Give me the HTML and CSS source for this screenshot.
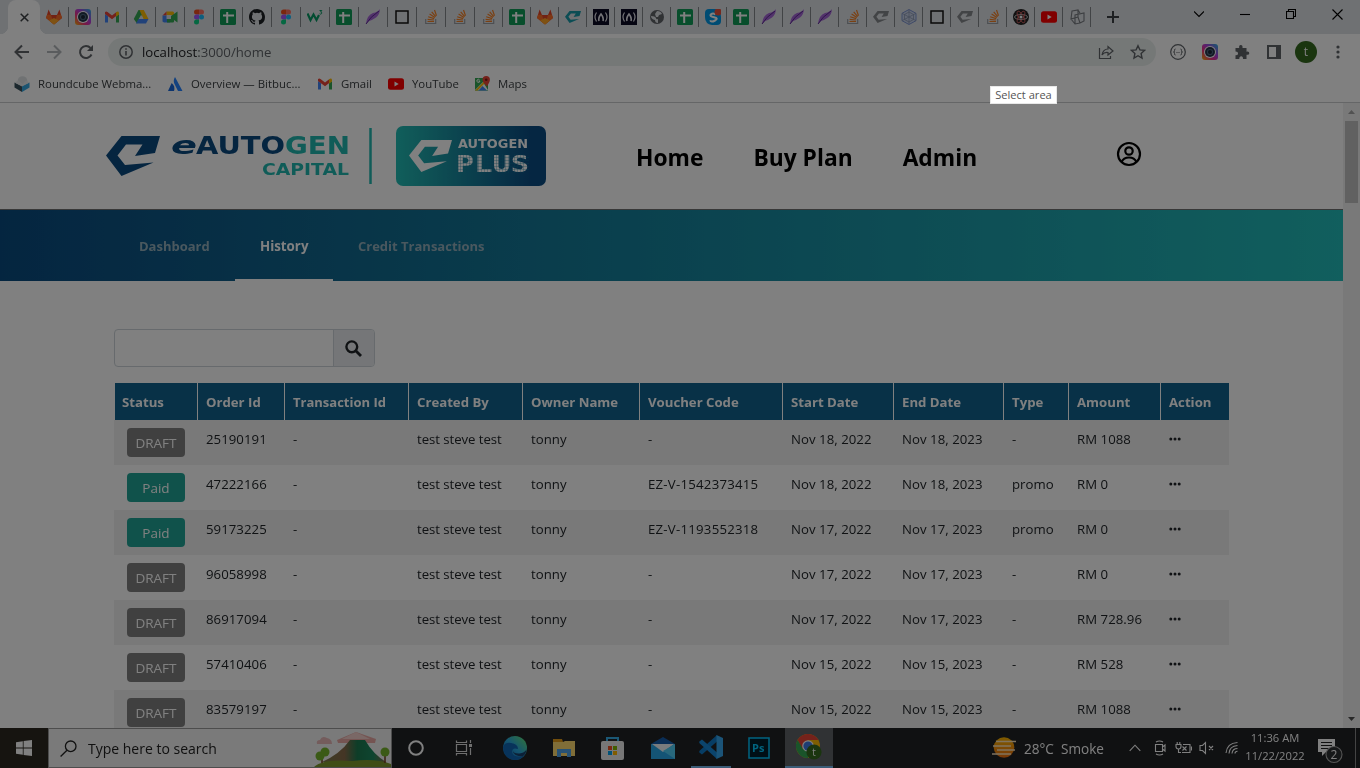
FILE: index.html
```html
<!DOCTYPE html>
<html lang="en">
<head>
<meta charset="utf-8">
<title>History</title>
<link rel="stylesheet" href="styles.css">
</head>
<body>
<svg class="defs" width="0" height="0" aria-hidden="true">
  <defs>
    <linearGradient id="plusbg"><stop offset="0" stop-color="#22bdb5"/><stop offset=".9" stop-color="#0a4c84"/></linearGradient>
    <linearGradient id="rainbow" x1="0" y1="1" x2="1" y2="0"><stop offset="0" stop-color="#f8b400"/><stop offset=".35" stop-color="#f0308a"/><stop offset=".6" stop-color="#b040e0"/><stop offset="1" stop-color="#22b8e0"/></linearGradient>
    <linearGradient id="edgeg" x1="0" y1="1" x2="1" y2="0"><stop offset="0" stop-color="#0c59a4"/><stop offset=".5" stop-color="#28a8e0"/><stop offset="1" stop-color="#66eb6e"/></linearGradient>
    <linearGradient id="sung" x1="0" y1="0" x2="0" y2="1"><stop offset="0" stop-color="#ffb900"/><stop offset="1" stop-color="#f07010"/></linearGradient>
    <linearGradient id="hill"><stop offset="0" stop-color="#7a7a4a"/><stop offset=".35" stop-color="#8a6a4a"/><stop offset=".55" stop-color="#1c7a50"/><stop offset=".8" stop-color="#1c8a60"/><stop offset="1" stop-color="#8a6a4a"/></linearGradient>
  </defs>
  <symbol id="gitlab" viewBox="0 0 16 16"><path fill="#e24329" d="M8 15.500 0 9 2.600.6 5 6h6L13.400.6 16 9z"/><path fill="#fc6d26" d="M0 9 1.200 5.500 5 6 8 15.500zM16 9l-1.200-3.500L11 6 8 15.500z"/><path fill="#fca326" d="m3 11.500 5-2.500 5 2.500-5 4z"/></symbol>
  <symbol id="cam" viewBox="0 0 16 16"><rect width="16" height="16" rx="3" fill="url(#rainbow)"/><circle cx="8" cy="8" r="6" fill="#fff"/><circle cx="8" cy="8" r="5" fill="#26364a"/><circle cx="8" cy="8" r="3.100" fill="#4c6680"/><circle cx="8" cy="8" r="2" fill="#1b2638"/></symbol>
  <symbol id="gmail" viewBox="0 0 16 16"><path fill="#4285f4" d="M1 3v10.500h3V7.300L1 5z"/><path fill="#34a853" d="M15 3v10.500h-3V7.300L15 5z"/><path fill="#ea4335" d="M1 3.200Q2 2 3.500 3L8 6.500 12.500 3v3.800L8 10.300 1 5z"/><path fill="#fbbc04" d="M12 3.300Q14.500 1.500 15 4v1.500l-3 2.200z"/></symbol>
  <symbol id="drive" viewBox="0 0 16 16"><path fill="#34a853" d="M5.500 1h3L10 4 4 14.500.8 10z"/><path fill="#fbbc04" d="M6.500 1h4.300l4.700 9h-5z"/><path fill="#4285f4" d="M5.500 10h10L13 14.500H3z"/><path fill="#dee1e6" d="m8 6 2.300 4H5.700z"/></symbol>
  <symbol id="meet" viewBox="0 0 16 16"><path fill="#fbbc04" d="M4.500 2.500H11l1 1V7l-3-1H4.500z"/><path fill="#ea4335" d="M.5 6.500 4.500 2.500v4z"/><path fill="#4285f4" d="M.5 6.500h4V10H9l-1 3.500H2L.5 12.500z"/><path fill="#34a853" d="M5 10h4V7l6.500-4.500v11L12 11v1.500q0 1-1 1H5z"/></symbol>
  <symbol id="figma" viewBox="0 0 16 16"><path fill="#f24e1e" d="M8 .5H5.500a2.500 2.500 0 0 0 0 5H8z"/><path fill="#ff7262" d="M8 .5h2.500a2.500 2.500 0 0 1 0 5H8z"/><path fill="#a259ff" d="M8 5.500H5.500a2.500 2.500 0 0 0 0 5H8z"/><circle cx="10.500" cy="8" r="2.500" fill="#1abcfe"/><path fill="#0acf83" d="M8 10.500H5.500A2.500 2.500 0 1 0 8 13z"/></symbol>
  <symbol id="sheet" viewBox="0 0 16 16"><rect width="16" height="16" rx="1.500" fill="#0f9d58"/><path stroke="#fff" stroke-width="2" d="M7.200 3v11M3 6.500h11"/></symbol>
  <symbol id="github" viewBox="0 0 16 16"><path fill="#1b1f23" d="M8 0C3.580 0 0 3.580 0 8c0 3.540 2.290 6.530 5.470 7.590.4.070.55-.17.55-.38 0-.19-.01-.82-.01-1.490-2.010.37-2.530-.49-2.690-.94-.09-.23-.48-.94-.82-1.130-.28-.15-.68-.52-.01-.53.63-.01 1.080.58 1.230.82.72 1.210 1.870.87 2.330.66.07-.52.28-.87.51-1.070-1.780-.2-3.640-.89-3.640-3.950 0-.87.31-1.590.82-2.150-.08-.2-.36-1.020.08-2.120 0 0 .67-.21 2.200.82a7.600 7.600 0 0 1 4 0c1.530-1.040 2.200-.82 2.200-.82.44 1.100.16 1.920.08 2.120.51.56.82 1.270.82 2.150 0 3.070-1.870 3.750-3.650 3.950.29.25.54.73.54 1.480 0 1.070-.01 1.930-.01 2.200 0 .21.15.46.55.38A8.010 8.010 0 0 0 16 8c0-4.420-3.580-8-8-8z"/></symbol>
  <symbol id="w3" viewBox="0 0 16 16"><path fill="none" stroke="#059862" stroke-width="2.200" d="m.5 4.500 3 6.500L6.500 5.500l3 5.500 2.500-5"/><path fill="none" stroke="#059862" stroke-width="1" d="M12.500 1.500h2.300L13.600 3q1.700.2 1 1.600-.7 1-2 .2"/></symbol>
  <symbol id="feather" viewBox="0 0 16 16"><path fill="#a565d6" d="M1 15Q2 6 8 4q5-1 7-4-.5 6-4 8.500T4 12z"/><path stroke="#5c2a94" fill="none" d="M1 15Q5 8 14 2"/></symbol>
  <symbol id="square" viewBox="0 0 16 16"><path fill="none" stroke="#111" stroke-width="1.500" d="M2 2h12v12H2z"/></symbol>
  <symbol id="so" viewBox="0 0 16 16"><path fill="none" stroke="#9a9ea4" stroke-width="1.200" d="M2.700 10v4.500h10V10"/><path fill="none" stroke="#f48024" stroke-width="1.200" d="M4.500 12.500h6.500M4.600 10.300l6.300.7M5.200 7.700l6 1.900M6.600 5.100l5.300 3.300M8.700 2.800l4 4.800M11.500 1l2 5.700"/></symbol>
  <symbol id="mark" viewBox="0 0 54 40"><path fill="currentColor" d="M15.500 0H54l-5 17-20 3 7.500-11.500H20l-8.500 11L19 29l28.500-2.500L15.500 40 0 19.500z"/></symbol>
  <symbol id="fcc" viewBox="0 0 16 16"><path fill="#0a0a23" d="M0 0h16v16H0z"/><path fill="none" stroke="#e8e8f0" stroke-width="1.200" d="M3.500 3.500q-3 4.500 0 9M12.500 3.500q3 4.500 0 9"/><path fill="none" stroke="#e8e8f0" stroke-width="1.600" d="M6 12q-1-3 2-7 3 4 2 7"/></symbol>
  <symbol id="globe" viewBox="0 0 16 16"><circle cx="8" cy="8" r="7" fill="#5f6368"/><path fill="#dee1e6" d="M2 7q4 0 5 2 0 2 2 1v4q-3 0-3-3Q2 10 2 7zM8 2q4 0 5 3l-3 1-1 2H7L6 5z"/></symbol>
  <symbol id="skype" viewBox="0 0 16 16"><path fill="#0097e6" d="M0 4q0-4 4-4h7q5 2 5 8v4q0 4-4 4H7Q0 15 0 8z"/><path fill="none" stroke="#fff" stroke-width="2" d="M10.500 5.500Q8 3.500 6 5.300T9 8.200t1 3.300-4.800-.2"/><circle cx="13" cy="3" r="3.500" fill="#e8503c"/></symbol>
  <symbol id="hex" viewBox="0 0 16 16"><path fill="#c8d2e8" stroke="#7d94cf" d="m8 .5 7 3.800v7.400l-7 3.800-7-3.800V4.300z"/><path fill="none" stroke="#8a98b4" stroke-width=".8" d="m8 3 4.500 2.500v5L8 13l-4.500-2.500v-5zM8 .5V15M1 4.300l14 7.400M15 4.300 1 11.700"/></symbol>
  <symbol id="atom" viewBox="0 0 16 16"><circle cx="8" cy="8" r="8" fill="#222"/><g fill="none" stroke="#ddd" stroke-width=".8"><ellipse cx="8" cy="8" rx="6.500" ry="2.500"/><ellipse cx="8" cy="8" rx="6.500" ry="2.500" stroke="#d66" transform="rotate(60 8 8)"/><ellipse cx="8" cy="8" rx="6.500" ry="2.500" stroke="#d66" transform="rotate(120 8 8)"/></g><circle cx="8" cy="8" r="1.600" fill="#fff"/></symbol>
  <symbol id="yt" viewBox="0 0 16 16"><rect y="2.200" width="16" height="11.600" rx="2.500" fill="#f00"/><path fill="#fff" d="m6.500 5.500 4.200 2.500-4.200 2.500z"/></symbol>
  <symbol id="cube" viewBox="0 0 16 16"><path fill="none" stroke="#777b80" stroke-width="1.100" d="m3 2 6-1v7l-7 2zM9 1l2 3M9 8l2 6M2 10l4 5 5-1M6 15V6l9-2v8l-4 2"/></symbol>
  <symbol id="cubebm" viewBox="0 0 16 16"><circle cx="8.500" cy="5" r="4.800" fill="#dfe3e6"/><path fill="#37505c" d="M.5 6.500 8 10v6L.5 11.500z"/><path fill="#36a9e1" d="M15.500 6.500 8 10v6l7.500-4.500z"/><path fill="#e9eced" d="m.5 6.500 4-2 4 3.500 3.500-3.500 3.500 2L8 10.500z"/></symbol>
  <symbol id="atl" viewBox="0 0 16 16"><path fill="#2684ff" d="M8 1q-2.500 4 0 8l3 6h4.500z"/><path fill="#1868db" d="M4.700 7Q8.500 10 7 15H1z"/></symbol>
  <symbol id="maps" viewBox="0 0 16 16"><path fill="#34a853" d="M1 2h13v12.500H1z"/><path fill="#fff" d="m1 14 8-8 5 8z"/><path fill="#fbbc04" d="m1 14.500 10-10 1 1.500-8.500 8.500z"/><path fill="#4285f4" d="m4.500 14.500 4-4.500 4.500 4.500z"/><path fill="#ea4335" d="M8.500 3.800a3.700 3.700 0 0 1 7.400 0q0 2.200-3 6.700Q8.500 6 8.500 3.800z"/><circle cx="12.200" cy="3.800" r="1.300" fill="#7b1c14"/><path fill="none" stroke="#fff" d="M5.500 3.800a1.500 1.500 0 1 0 .4 1.200H4.500"/></symbol>
  <symbol id="dots" viewBox="0 0 12 4"><circle cx="1.800" cy="2" r="1.500"/><circle cx="6" cy="2" r="1.500"/><circle cx="10.200" cy="2" r="1.500"/></symbol>
</svg>

<div class="screen">
  <div class="tabstrip">
    <div class="tab-active"><svg width="9" height="9" viewBox="0 0 9 9"><path d="m.7.700 7.600 7.600M8.300.7.700 8.300" stroke="#3c4043" stroke-width="1.500"/></svg></div>
    <div class="tabs wide">
      <span class="tab"><svg><use href="#gitlab"/></svg></span><span class="tab"><svg><use href="#cam"/></svg></span><span class="tab"><svg><use href="#gmail"/></svg></span><span class="tab"><svg><use href="#drive"/></svg></span><span class="tab"><svg><use href="#meet"/></svg></span><span class="tab"><svg><use href="#figma"/></svg></span><span class="tab"><svg><use href="#sheet"/></svg></span><span class="tab"><svg><use href="#github"/></svg></span><span class="tab"><svg><use href="#figma"/></svg></span><span class="tab"><svg><use href="#w3"/></svg></span><span class="tab"><svg><use href="#sheet"/></svg></span><span class="tab"><svg><use href="#feather"/></svg></span><span class="tab"><svg><use href="#square"/></svg></span><span class="tab"><svg><use href="#so"/></svg></span><span class="tab"><svg><use href="#so"/></svg></span>
    </div>
    <div class="tabs">
      <span class="tab"><svg><use href="#so"/></svg></span><span class="tab"><svg><use href="#sheet"/></svg></span><span class="tab"><svg><use href="#gitlab"/></svg></span><span class="tab teal"><svg><use href="#mark"/></svg></span><span class="tab"><svg><use href="#fcc"/></svg></span><span class="tab"><svg><use href="#fcc"/></svg></span><span class="tab"><svg><use href="#globe"/></svg></span><span class="tab"><svg><use href="#sheet"/></svg></span><span class="tab"><svg><use href="#skype"/></svg></span><span class="tab"><svg><use href="#sheet"/></svg></span><span class="tab"><svg><use href="#feather"/></svg></span><span class="tab"><svg><use href="#feather"/></svg></span><span class="tab"><svg><use href="#feather"/></svg></span><span class="tab"><svg><use href="#so"/></svg></span><span class="tab gray"><svg><use href="#mark"/></svg></span><span class="tab"><svg><use href="#hex"/></svg></span><span class="tab"><svg><use href="#square"/></svg></span><span class="tab gray"><svg><use href="#mark"/></svg></span><span class="tab"><svg><use href="#so"/></svg></span><span class="tab"><svg><use href="#atom"/></svg></span><span class="tab"><svg><use href="#yt"/></svg></span><span class="tab"><svg><use href="#cube"/></svg></span>
    </div>
    <svg class="newtab" width="12" height="12" viewBox="0 0 12 12"><path d="M6 0v12M0 6h12" stroke="#3c4043" stroke-width="2"/></svg>
    <div class="winctl">
      <svg width="10" height="10" viewBox="0 0 10 10"><path d="m0 2.500 5 5 5-5"/></svg>
      <svg width="10" height="10" viewBox="0 0 10 10"><path d="M0 5.500h10"/></svg>
      <svg width="10" height="10" viewBox="0 0 10 10"><path d="M.5 2.500h7v7h-7zM2.500 2.500v-2h7v7h-2"/></svg>
      <svg width="11" height="11" viewBox="0 0 11 11"><path d="m.5.500 10 10m0-10-10 10"/></svg>
    </div>
  </div>

  <div class="toolbar">
    <div class="navbtns">
      <svg width="16" height="16" viewBox="0 0 16 16"><path d="M15 8H2M8 1.500 1.500 8 8 14.500" fill="none" stroke="#5f6368" stroke-width="2"/></svg>
      <svg width="16" height="16" viewBox="0 0 16 16"><path d="M1 8h13M8 1.500 14.500 8 8 14.500" fill="none" stroke="#b4b7bb" stroke-width="2"/></svg>
      <svg width="16" height="16" viewBox="0 0 16 16"><path d="M13.500 10.500A6 6 0 1 1 12.500 4" fill="none" stroke="#5f6368" stroke-width="2"/><path d="M15 1v6H9z" fill="#5f6368"/></svg>
    </div>
    <div class="omnibox">
      <svg width="14" height="14" viewBox="0 0 14 14"><circle cx="7" cy="7" r="6.200" fill="none" stroke="#5f6368" stroke-width="1.500"/><path d="M7 6v4.500M7 3.300v1.500" stroke="#5f6368" stroke-width="1.600"/></svg>
      <div class="url"><b>localhost</b>:3000/home</div>
      <svg width="16" height="16" viewBox="0 0 16 16"><path d="M1.500 4v10.500h11V12M4 11q1-6 6-6V2.500L15 7l-5 4V8.500q-4-.5-6 2.500z" fill="none" stroke="#5f6368" stroke-width="1.200"/></svg>
      <svg class="star" width="16" height="16" viewBox="0 0 16 16"><path d="m8 1.700 1.900 4.200 4.600.5-3.400 3.100.9 4.500-4-2.300L4 14l.9-4.500-3.400-3.100 4.600-.5z" fill="none" stroke="#5f6368" stroke-width="1.400"/></svg>
    </div>
    <div class="exts">
      <svg width="16" height="16" viewBox="0 0 16 16"><circle cx="8" cy="8" r="7.300" fill="none" stroke="#5f6368" stroke-width="1.200"/><path d="M5.500 5q-1.200 0-1 1.500T3.500 8q1.200 0 1 1.500t1 1.500M10.500 5q1.200 0 1 1.500t1 1.500q-1.200 0-1 1.500t-1 1.500M6.500 8.500h1m1 0h1" fill="none" stroke="#5f6368"/></svg>
      <svg width="16" height="16"><use href="#cam"/></svg>
      <svg width="16" height="16" viewBox="0 0 16 16"><path d="M1.500 4h3.700Q4.700 1 6.800 1t1.700 3H12.500v3.700q2.800-.5 2.800 1.500t-2.800 1.600V15H9q.1-2.800-1.800-2.800T5.300 15H1.500v-3.700q2.600 0 2.600-1.900T1.500 7.600z" fill="#5f6368"/></svg>
      <svg width="14" height="14" viewBox="0 0 14 14"><path d="M1 1h12v12H1z" fill="none" stroke="#5f6368" stroke-width="2"/><path d="M9 1h4v12H9z" fill="#5f6368"/></svg>
      <span class="avatar">t</span>
      <svg class="kebab" width="4" height="14" viewBox="0 0 4 14" fill="#5f6368"><circle cx="2" cy="2" r="1.600"/><circle cx="2" cy="7" r="1.600"/><circle cx="2" cy="12" r="1.600"/></svg>
    </div>
  </div>

  <div class="bookmarks">
    <span class="bm b1"><svg><use href="#cubebm"/></svg><em>Roundcube Webma...</em></span>
    <span class="bm b2"><svg><use href="#atl"/></svg><em>Overview — Bitbuc...</em></span>
    <span class="bm b3"><svg><use href="#gmail"/></svg><em>Gmail</em></span>
    <span class="bm b4"><svg><use href="#yt"/></svg><em>YouTube</em></span>
    <span class="bm b5"><svg><use href="#maps"/></svg><em>Maps</em></span>
  </div>

  <div class="viewport">
    <div class="page">
      <header class="top">
        <svg class="logo" width="442" height="60" viewBox="0 0 442 60">
          <g color="#0a4a80"><use href="#mark" x="0" y="10" width="54" height="40"/></g>
          <g class="brand">
            <text x="65" y="28" font-size="24" font-style="italic" textLength="26" lengthAdjust="spacingAndGlyphs" fill="#0a4a80">e</text>
            <text x="90" y="28" font-size="24" textLength="89" lengthAdjust="spacingAndGlyphs" fill="#0a4a80">AUTO</text>
            <text x="179" y="28" font-size="24" textLength="65" lengthAdjust="spacingAndGlyphs" fill="#20b9b0">GEN</text>
            <text x="156" y="49" font-size="15.500" textLength="87" lengthAdjust="spacingAndGlyphs" fill="#20b9b0">CAPITAL</text>
          </g>
          <path d="M264.500 2v56" stroke="#20b9b0" stroke-width="2.500"/>
          <rect x="290" y="0" width="150" height="60" rx="7" fill="url(#plusbg)"/>
          <g color="#fff"><use href="#mark" x="303" y="14" width="43" height="32"/></g>
          <g class="brand" fill="#fff">
            <text x="352" y="22" font-size="12" textLength="70" lengthAdjust="spacingAndGlyphs">AUTOGEN</text>
          </g>
          <text class="plus" x="350" y="46" font-size="23" textLength="73" lengthAdjust="spacingAndGlyphs" fill="#fff">PLUS</text>
          <path class="dotgrid" d="M351 31.500h72M351 34.500h72M351 37.500h72M351 40.500h72M351 43.500h72M354.500 28v19M357.500 28v19M360.500 28v19M363.500 28v19M366.500 28v19M372.500 28v19M375.500 28v19M378.500 28v19M381.500 28v19M384.500 28v19M390.500 28v19M393.500 28v19M396.500 28v19M399.500 28v19M402.500 28v19M408.500 28v19M411.500 28v19M414.500 28v19M417.500 28v19"/>
        </svg>
        <nav class="mainnav"><a>Home</a><a>Buy Plan</a><a>Admin</a></nav>
        <svg class="user" width="26" height="26" viewBox="0 0 26 26" fill="none" stroke="#000" stroke-width="2.200"><circle cx="13" cy="13" r="11"/><circle cx="13" cy="10" r="3.700"/><path d="M5.500 21q2-4.500 7.500-4.500t7.500 4.500"/></svg>
      </header>
      <nav class="subnav"><a class="s1">Dashboard</a><a class="s2 on">History</a><a class="s3">Credit Transactions</a></nav>
      <main class="content">
        <div class="search"><div class="field"></div><div class="go"><svg width="17" height="17" viewBox="0 0 17 17"><circle cx="6.800" cy="6.800" r="5.400" fill="none" stroke="#212529" stroke-width="2.400"/><path d="m11 11 5 5" stroke="#212529" stroke-width="2.800"/></svg></div></div>
        <table class="orders">
          <colgroup><col class="c1"><col class="c2"><col class="c3"><col class="c4"><col class="c5"><col class="c6"><col class="c7"><col class="c8"><col class="c9"><col class="c10"><col class="c11"></colgroup>
          <thead><tr><th>Status</th><th>Order Id</th><th>Transaction Id</th><th>Created By</th><th>Owner Name</th><th>Voucher Code</th><th>Start Date</th><th>End Date</th><th>Type</th><th>Amount</th><th>Action</th></tr></thead>
          <tbody>
            <tr><td><span class="badge">DRAFT</span></td><td>25190191</td><td>-</td><td>test steve test</td><td>tonny</td><td>-</td><td>Nov 18, 2022</td><td>Nov 18, 2023</td><td>-</td><td>RM 1088</td><td><svg class="more"><use href="#dots"/></svg></td></tr>
            <tr><td><span class="badge paid">Paid</span></td><td>47222166</td><td>-</td><td>test steve test</td><td>tonny</td><td class="code-cell">EZ-V-1542373415</td><td>Nov 18, 2022</td><td>Nov 18, 2023</td><td>promo</td><td>RM 0</td><td><svg class="more"><use href="#dots"/></svg></td></tr>
            <tr><td><span class="badge paid">Paid</span></td><td>59173225</td><td>-</td><td>test steve test</td><td>tonny</td><td class="code-cell">EZ-V-1193552318</td><td>Nov 17, 2022</td><td>Nov 17, 2023</td><td>promo</td><td>RM 0</td><td><svg class="more"><use href="#dots"/></svg></td></tr>
            <tr><td><span class="badge">DRAFT</span></td><td>96058998</td><td>-</td><td>test steve test</td><td>tonny</td><td>-</td><td>Nov 17, 2022</td><td>Nov 17, 2023</td><td>-</td><td>RM 0</td><td><svg class="more"><use href="#dots"/></svg></td></tr>
            <tr><td><span class="badge">DRAFT</span></td><td>86917094</td><td>-</td><td>test steve test</td><td>tonny</td><td>-</td><td>Nov 17, 2022</td><td>Nov 17, 2023</td><td>-</td><td>RM 728.96</td><td><svg class="more"><use href="#dots"/></svg></td></tr>
            <tr><td><span class="badge">DRAFT</span></td><td>57410406</td><td>-</td><td>test steve test</td><td>tonny</td><td>-</td><td>Nov 15, 2022</td><td>Nov 15, 2023</td><td>-</td><td>RM 528</td><td><svg class="more"><use href="#dots"/></svg></td></tr>
            <tr><td><span class="badge">DRAFT</span></td><td>83579197</td><td>-</td><td>test steve test</td><td>tonny</td><td>-</td><td>Nov 15, 2022</td><td>Nov 15, 2023</td><td>-</td><td>RM 1088</td><td><svg class="more"><use href="#dots"/></svg></td></tr>
          </tbody>
        </table>
      </main>
    </div>
    <div class="scrollbar">
      <svg width="7" height="4" viewBox="0 0 7 4"><path d="M0 4 3.500 0 7 4z" fill="#a3a3a3"/></svg>
      <div class="thumb"></div>
      <svg class="down" width="7" height="4" viewBox="0 0 7 4"><path d="m0 0 3.500 4L7 0z" fill="#505050"/></svg>
    </div>
  </div>

  <footer class="taskbar">
    <div class="start"><svg width="16" height="16" viewBox="0 0 16 16" fill="#fff"><path d="M0 2.200 6.800 1.200V7.600H0zM7.600 1.100 16 0v7.600H7.600zM0 8.400h6.800v6.400L0 13.800zM7.600 8.400H16V16l-8.400-1.100z"/></svg></div>
    <div class="find">
      <svg width="17" height="17" viewBox="0 0 17 17"><circle cx="10.700" cy="6.300" r="5.300" fill="none" stroke="#222" stroke-width="1.300"/><path d="M7 10.200.6 16.500" stroke="#222" stroke-width="1.300"/></svg>
      <span>Type here to search</span>
      <svg class="scene" width="77" height="38" viewBox="0 0 77 38"><path d="M3 15q-1-4 3-4 2-5 7-2 5 1 5 6z" fill="#e8b8b8"/><path d="M23 11 42 3l20 7-1 4H24z" fill="#e9a9a5"/><path d="M42 3 28 10h28z" fill="#f3cfcb"/><path d="M36 11h15q8 14 21 22H8q18-8 28-22z" fill="url(#hill)"/><path d="M0 38q8-8 38-6 24-3 39 3v3z" fill="#7e9a2c"/><path d="M8 26v8m63-9v9" stroke="#714022" stroke-width="1.500"/><g fill="#75b52c"><circle cx="6" cy="27" r="4.500"/><circle cx="11" cy="23" r="4.500"/><circle cx="71" cy="23" r="4.500"/></g></svg>
    </div>
    <div class="apps">
      <span><svg width="18" height="18" viewBox="0 0 18 18"><circle cx="9" cy="9" r="6.800" fill="none" stroke="#fff" stroke-width="2"/></svg></span>
      <span><svg width="18" height="18" viewBox="0 0 18 18" fill="none" stroke="#ddd" stroke-width="1.200"><path d="M1.500 5.500h10v7h-10zM1.500 1.500v2h10v-2M1.500 16.500v-2h10v2M15.500 1v3M15.500 9v7"/><path d="M14 5h3v3h-3z" fill="#ddd" stroke="none"/></svg></span>
      <span class="edge"><svg width="24" height="24" viewBox="0 0 24 24"><circle cx="12" cy="12" r="12" fill="url(#edgeg)"/><path d="M0 11Q2 6 8 7q7 1 7 6-6-2-6 3 1 6 12 4-5 5-11 3.800Q1 22 0 11z" fill="#0f65b5"/><path d="M9.500 14q1 4 7 3.500 5-.5 7-4-.5 5-4 7-9 0-10-6.500z" fill="#17406e"/></svg></span>
      <span class="files"><svg width="22" height="20" viewBox="0 0 22 20"><path d="M0 1h9l1 3H0z" fill="#e39b18"/><path d="M0 4h10l2-1h10v15H0z" fill="#ffdc70"/><path d="M4 19v-8h14v8h-4v-4H8v4z" fill="#50a5e8"/></svg></span>
      <span class="store"><svg width="23" height="24" viewBox="0 0 23 24"><path d="M6 7V2h11v5" fill="none" stroke="#35b0ea" stroke-width="2"/><rect y="5" width="23" height="19" rx="2" fill="#eee"/><path d="M7 10h4v4H7z" fill="#f25022"/><path d="M12 10h4v4h-4z" fill="#7fba00"/><path d="M7 15h4v4H7z" fill="#00a4ef"/><path d="M12 15h4v4h-4z" fill="#ffb900"/></svg></span>
      <span class="mail"><svg width="24" height="22" viewBox="0 0 24 22"><path d="M0 7 12 0l12 7z" fill="#155cad"/><path d="M0 7h24v15H0z" fill="#28a8ea"/><path d="M1 7h22l-11 8z" fill="#f3f7fb"/><path d="M24 7v15L12 14z" fill="#50d0f8"/></svg></span>
      <span class="code"><svg width="24" height="24" viewBox="0 0 24 24"><path d="M18 0v6.500L3 19.500.3 17.500V16L18 0z" fill="#0d7ac8"/><path d="M18 24v-6.500L3 4.500.3 6.500V8L18 24z" fill="#1689d8"/><path d="m17.500 0 6.500 3v18l-6.500 3z" fill="#35a7f0"/></svg></span>
      <span><svg width="22" height="22" viewBox="0 0 22 22"><path d="M1 1h20v20H1z" fill="#001e2c" stroke="#00c8ff" stroke-width="1.500"/><text class="ps" x="4" y="15">Ps</text></svg></span>
      <span class="chrome"><svg width="26" height="26" viewBox="0 0 26 26"><circle cx="12" cy="12" r="12" fill="#fbbc04"/><path d="M1.600 6A12 12 0 0 1 22.400 6H12l-6 9z" fill="#ea4335"/><path d="M1.600 6A12 12 0 0 0 12 24l5-9-10 0z" fill="#34a853"/><circle cx="12" cy="12" r="5.800" fill="#fff"/><circle cx="12" cy="12" r="4.600" fill="#3d7be8"/><circle cx="18" cy="18" r="7.600" fill="#33691e"/><text class="ct" x="16.200" y="22">t</text></svg></span>
    </div>
    <div class="tray">
      <svg class="sun" width="24" height="22" viewBox="0 0 24 22"><circle cx="12" cy="10.500" r="10.300" fill="url(#sung)"/><path d="M4 4.500h20M1 9h18M5 13h18M0 17h19" stroke="#ffe6bd" stroke-width="1.700"/></svg>
      <span class="weather">28°C&nbsp; Smoke</span>
      <svg class="i1" width="12" height="8" viewBox="0 0 12 8"><path d="m.7 6.800 5.300-5.600 5.300 5.600"/></svg>
      <svg class="i2" width="14" height="16" viewBox="0 0 14 16"><path d="M1.500 4.500h7v7h-7zM8.500 7l2.500-2v6L8.500 9M2 2Q5.500 0 9 2M2 14q3.500 2 7 0"/></svg>
      <svg class="i3" width="17" height="14" viewBox="0 0 17 14"><path d="M1 3.500h5v2Q6 8 3.500 8T1 5.500zM2.200 3.500V1M4.800 3.500V1M3.500 8v3.500H6M8 3.500h7v8H7M16.500 5.500v4M7.500 5.500l4 4M11.500 5.500l-4 4"/></svg>
      <svg class="i4" width="16" height="14" viewBox="0 0 16 14"><path d="M1 4.500h2.500l3-3v11l-3-3H1zM10 5l4 4M14 5l-4 4"/></svg>
      <svg class="i5" width="14" height="14" viewBox="0 0 14 14"><path d="M1 12Q2 2 12.500 1.500M4 12.500Q4.500 5 12.500 4.500M7 12.500q.5-5 5.500-5M10 12.500q0-2.200 2.500-2.200"/></svg>
      <div class="clock">11:36 AM<br>11/22/2022</div>
      <svg class="note" width="26" height="26" viewBox="0 0 26 26"><path d="M0 1h17v13H8l-4 4v-4H0z" fill="#fff"/><path d="M3 4.500h11M3 7.500h11M3 10.500h8" stroke="#222" stroke-width="1"/><circle cx="16" cy="16.500" r="8" fill="#2d2f31" stroke="#aaa"/><text x="12.500" y="21">2</text></svg>
      <i class="peek"></i>
    </div>
  </footer>
</div>
<div class="tip">Select area</div>
</body>
</html>
```
FILE: styles.css
```css
* { box-sizing: border-box; }
body { margin: 0; width: 1360px; height: 768px; overflow: hidden; position: relative; background: #808080; font-family: "Open Sans", "Noto Sans", sans-serif; }
svg { display: block; flex: none; }
.defs { position: absolute; }
/* the desktop is dimmed while an area is being selected */
.screen { width: 1360px; height: 768px; display: flex; flex-direction: column; background: #fff; filter: brightness(.5); }
.tip { position: absolute; left: 990px; top: 86px; width: 67px; height: 18px; background: #fff; border: 1px solid #e8e8e8; color: #555; font-size: 11.1px; line-height: 16px; text-align: center; white-space: nowrap; }

.tabstrip { height: 34px; display: flex; background: #dee1e6; flex: none; background-image: radial-gradient(circle at 0 0, #dee1e6 8px, #fff 8.5px), radial-gradient(circle at 100% 0, #dee1e6 8px, #fff 8.5px); background-size: 8px 8px; background-repeat: no-repeat; background-position: 0 26px, 40px 26px; padding-left: 8px; }
.tab-active { width: 32px; height: 34px; background: #fff; border-radius: 8px 8px 0 0; display: flex; align-items: center; justify-content: center; }
.tabs { display: flex; height: 34px; align-items: center; }
.tab { width: 28px; height: 20px; border-right: 1px solid #85888d; display: flex; align-items: center; justify-content: center; }
.wide .tab { width: 29px; }
.tab svg { width: 16px; height: 16px; }
.teal { color: #179aa8; }
.gray { color: #85888b; }
.newtab { margin: 11px 0 0 16px; }
.winctl { margin-left: auto; display: flex; gap: 36px; padding: 9px 17px 0 0; }
.winctl svg { fill: none; stroke: #000; stroke-width: 1.1; }

.toolbar { height: 36px; display: flex; align-items: center; flex: none; }
.navbtns { width: 108px; padding-left: 14px; display: flex; gap: 16px; }
.omnibox { width: 1048px; height: 28px; border-radius: 14px; background: #eaf0ee; display: flex; align-items: center; padding: 0 10px 0 11px; }
.url { flex: 1; padding-left: 9px; font-size: 13.2px; line-height: 28px; color: #5f6368; }
.url b { font-weight: 400; color: #202124; }
.star { margin-left: 16px; }
.exts { display: flex; align-items: center; padding-left: 14px; gap: 16px; }
.exts svg:nth-of-type(4) { margin: 0 -1px 0 1px; }
.avatar { width: 22px; height: 22px; border-radius: 50%; background: #33691e; color: #fff; font-size: 12px; line-height: 21px; text-align: center; margin-right: 2px; margin-left: -1px; }
.kebab { margin-left: 1px; }
.bookmarks { height: 33px; display: flex; border-bottom: 1px solid #c9cbce; padding: 4px 0 0 14px; flex: none; }
.bm { display: flex; align-items: center; height: 20px; gap: 8px; white-space: nowrap; }
.bm svg { width: 16px; height: 16px; }
.bm em { font-style: normal; font-size: 11.4px; line-height: 18px; color: #3c4043; }
.b1 { width: 153px; } .b2 { width: 150px; } .b3 { width: 71px; } .b4 { width: 86px; }

.viewport { height: 625px; display: flex; overflow: hidden; flex: none; }
.page { width: 1343px; height: 625px; overflow: hidden; }
.top { height: 106px; display: flex; padding-left: 106px; }
.logo { margin-top: 23px; }
.brand { font-family: "DejaVu Sans", sans-serif; font-weight: 700; }
.plus { font-family: "DejaVu Sans Mono", monospace; font-weight: 700; }
.dotgrid { stroke: #127c9c; stroke-width: .5; stroke-opacity: .6; fill: none; }
.mainnav { display: flex; gap: 50px; padding: 37px 0 0 88px; width: 569px; font-size: 22.8px; line-height: 36px; font-weight: 700; color: #000; white-space: nowrap; }
.user { margin-top: 38px; margin-left: -1px; }
.subnav { height: 72px; border-top: 1px solid #707070; display: flex; background: linear-gradient(90deg, #094a80, #22bebb); padding-left: 114px; font-size: 13px; font-weight: 700; line-height: 73px; color: #94b0bd; white-space: nowrap; }
.subnav a { height: 71px; padding-left: 25px; }
.s1 { width: 121px; } .s2 { width: 98px; }
.subnav .on { color: #fff; border-bottom: 2px solid #fff; font-size: 13.3px; }
.content { padding: 48px 0 0 114px; }
.search { display: flex; width: 261px; height: 38px; border: 1px solid #ced4da; border-radius: 4px; overflow: hidden; }
.field { width: 219px; border-right: 1px solid #ced4da; }
.go { flex: 1; background: #e9ecef; display: flex; align-items: center; padding-left: 11px; }
.orders { margin-top: 16px; width: 1115px; table-layout: fixed; border-collapse: separate; border-spacing: 0; font-size: 13.2px; letter-spacing: .05px; color: #212529; }
.c1 { width: 83px; } .c2 { width: 87px; } .c3 { width: 124px; } .c4 { width: 114px; } .c5 { width: 117px; } .c6 { width: 143px; } .c7 { width: 111px; } .c8 { width: 110px; } .c9 { width: 65px; } .c10 { width: 92px; } .c11 { width: 69px; }
.orders th { height: 37px; padding: 0 0 0 8px; text-align: left; background: #10628e; color: #fff; border-left: 1px solid #fff; font-weight: 700; font-size: 13.2px; letter-spacing: 0; white-space: nowrap; }
.orders th:first-child { padding-left: 7px; }
.orders th:nth-child(3) { font-size: 13px; }
.orders td { height: 45px; padding: 9px 0 0 9px; vertical-align: top; line-height: 20px; white-space: nowrap; }
.orders td:nth-child(4) { letter-spacing: -.05px; }
.orders .code-cell { letter-spacing: .25px; }
.orders td:first-child { padding: 8px 0 0 13px; }
.orders tbody tr:nth-child(odd) { background: #f2f2f2; }
.badge { display: block; width: 58px; height: 29px; border-radius: 4px; background: #808080; color: #fff; text-align: center; line-height: 30px; font-size: 13.5px; letter-spacing: 0; }
.paid { background: #20a596; }
.more { width: 12px; height: 4px; margin-top: 8px; fill: #212529; }
.scrollbar { width: 17px; background: #f1f1f1; display: flex; flex-direction: column; align-items: center; padding: 7px 0 7px; }
.thumb { width: 13px; height: 82px; background: #c1c1c1; margin-top: 7px; }
.down { margin-top: auto; }

.taskbar { height: 40px; display: flex; background: #202224; color: #fff; flex: none; }
.start { width: 48px; background: #2c2820; display: flex; align-items: center; justify-content: center; }
.find { width: 344px; background: #f3f3f3; border: 1px solid #9a9a9a; display: flex; align-items: center; padding-left: 11px; color: #222; font-size: 14px; }
.find span { padding-left: 11px; flex: 1; }
.apps { display: flex; }
.apps span { width: 48px; height: 40px; display: flex; align-items: center; justify-content: center; }
.apps .edge { width: 54px; }
.apps .files { width: 43px; }
.apps .store { width: 55px; }
.apps .mail { width: 46px; }
.apps .code { border-bottom: 2px solid #76b9ed; width: 40px; margin: 0 4px 0 5px; }
.apps .chrome { width: 48px; margin-left: 2px; background: #606367; border-bottom: 2px solid #76b9ed; }
.ps { font-size: 11px; font-weight: 700; fill: #00c8ff; }
.ct { font-size: 10px; fill: #fff; }
.tray { display: flex; align-items: center; margin-left: auto; }
.tray svg { fill: none; stroke: #fff; stroke-width: 1.1; }
.tray .sun, .tray .note { stroke: none; }
.weather { font-size: 13.6px; width: 97px; padding: 0 0 0 8px; white-space: nowrap; }
.i1 { margin-left: 16px; }
.i2 { margin-left: 13px; }
.i3 { margin-left: 7px; }
.i4 { margin-left: 7px; }
.i5 { margin-left: 10px; }
.clock { width: 72px; font-size: 11.2px; line-height: 18px; text-align: center; margin: -2px 2px 0 0; }
.note { margin: 5px 0 0 5px; }
.tray .note text { font-size: 12px; fill: #fff; }
.peek { width: 1px; height: 40px; background: #888; margin: 0 4px 0 11px; }
```
